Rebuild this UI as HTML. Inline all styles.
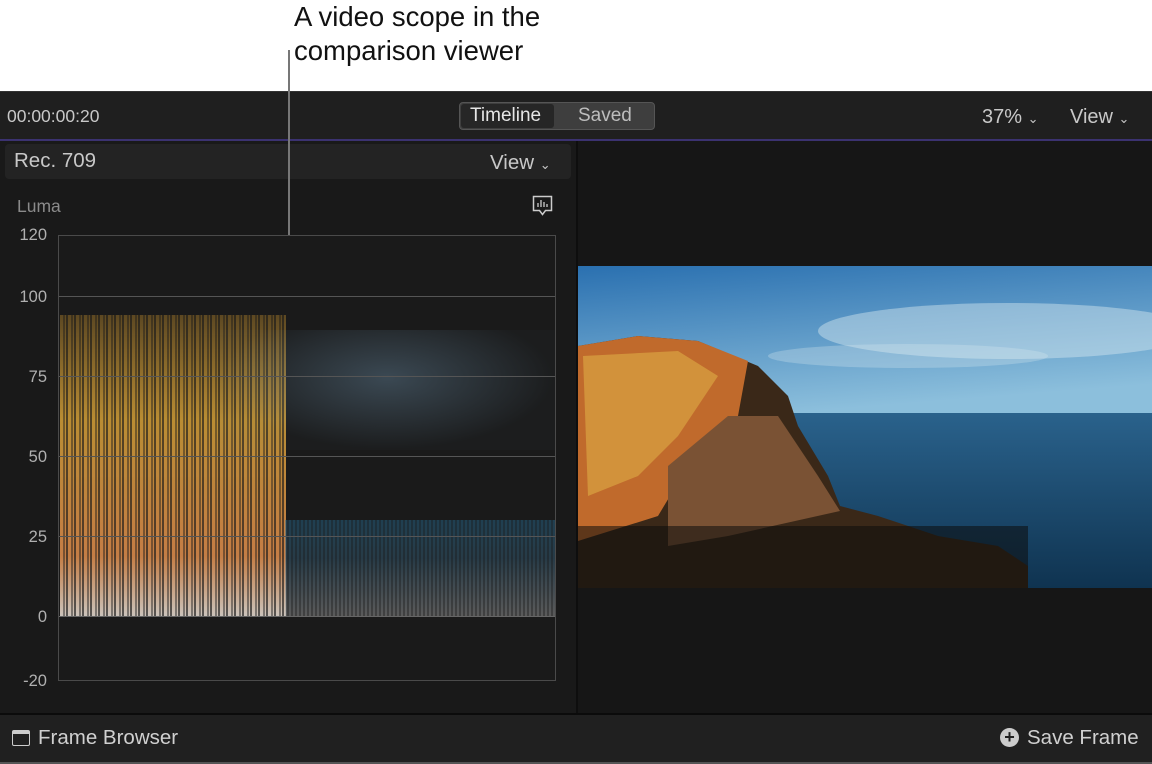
<!DOCTYPE html>
<html><head><meta charset="utf-8"><style>
*{margin:0;padding:0;box-sizing:border-box}
body{width:1152px;height:764px;background:#fff;position:relative;overflow:hidden;font-family:"Liberation Sans",sans-serif}
.a{position:absolute}
.t{color:#c8c8c8}
</style></head><body>
<div class="a" style="left:294px;top:0;font-size:27.5px;line-height:34px;color:#111">A video scope in the<br>comparison viewer</div>
<div class="a" style="left:288px;top:50px;width:2px;height:185px;background:#777;z-index:5"></div>
<div class="a" style="left:0;top:91px;width:1152px;height:673px;background:#161616"></div>
<div class="a" style="left:0;top:91px;width:1152px;height:48px;background:#1f1f1f;border-top:1px solid #333"></div>
<div class="a" style="left:0;top:139px;width:1152px;height:2px;background:#3b3270"></div>
<div class="a t" style="left:7px;top:106px;font-size:17.5px">00:00:00:20</div>
<div class="a" style="left:459px;top:102px;width:196px;height:28px;border-radius:4px;background:#3e3e3e;border:1px solid #555"></div>
<div class="a" style="left:461px;top:104px;width:93px;height:24px;border-radius:3px;background:#262626"></div>
<div class="a" style="left:470px;top:105px;font-size:19px;color:#e6e6e6">Timeline</div>
<div class="a" style="left:578px;top:105px;font-size:19px;color:#bdbdbd">Saved</div>
<div class="a t" style="left:982px;top:106px;font-size:20px">37% <span style="font-size:13px">⌄</span></div>
<div class="a t" style="left:1070px;top:106px;font-size:20px">View <span style="font-size:13px">⌄</span></div>
<div class="a" style="left:0;top:141px;width:576px;height:573px;background:#191919"></div>
<div class="a" style="left:576px;top:141px;width:2px;height:573px;background:#0e0e0e"></div>
<div class="a" style="left:5px;top:144px;width:566px;height:35px;background:#232323;border-radius:4px"></div>
<div class="a t" style="left:14px;top:149px;font-size:20.5px">Rec. 709</div>
<div class="a t" style="left:490px;top:151px;font-size:20.5px">View <span style="font-size:13px">⌄</span></div>
<div class="a" style="left:17px;top:196px;font-size:17.5px;color:#8a8a8a">Luma</div>
<svg class="a" style="left:532px;top:195px" width="22" height="22" viewBox="0 0 22 22"><path d="M1.5 1.5h18v14h-6l-3 4-3-4h-6z" fill="none" stroke="#ccc" stroke-width="1.5"/><path d="M6 12V8M9 12V5M12 12V7M15 12V9" stroke="#ccc" stroke-width="1.3"/></svg>
<div class="a" style="left:58px;top:235px;width:498px;height:446px;border:1px solid #4a4a4a;background:#1a1a1a"></div>
<div class="a" style="left:60px;top:315px;width:226px;height:301px;background:linear-gradient(180deg,rgba(220,160,50,.35),rgba(240,180,60,.75) 35%,rgba(240,150,80,.8) 80%,rgba(235,225,215,.85));-webkit-mask:repeating-linear-gradient(90deg,#000 0 3px,rgba(0,0,0,.55) 3px 5px,#000 5px 6px,rgba(0,0,0,.35) 6px 8px)"></div>
<div class="a" style="left:220px;top:330px;width:335px;height:120px;background:radial-gradient(ellipse at 50% 40%,rgba(120,160,190,.35),rgba(80,120,150,.03) 70%)"></div>
<div class="a" style="left:285px;top:520px;width:270px;height:96px;background:linear-gradient(180deg,rgba(40,110,150,.45),rgba(60,110,140,.4) 40%,rgba(170,170,170,.45));-webkit-mask:repeating-linear-gradient(90deg,#000 0 2px,rgba(0,0,0,.6) 2px 4px)"></div>
<div class="a" style="left:59px;top:296px;width:496px;height:1px;background:#555"></div>
<div class="a" style="left:59px;top:376px;width:496px;height:1px;background:#555"></div>
<div class="a" style="left:59px;top:456px;width:496px;height:1px;background:#555"></div>
<div class="a" style="left:59px;top:536px;width:496px;height:1px;background:#555"></div>
<div class="a" style="left:59px;top:616px;width:496px;height:1px;background:#666"></div>
<div class="a" style="left:0;top:225px;width:47px;text-align:right;font-size:16.5px;color:#b0b0b0;line-height:20px">
<div style="position:absolute;right:0;top:0">120</div><div style="position:absolute;right:0;top:62px">100</div><div style="position:absolute;right:0;top:142px">75</div><div style="position:absolute;right:0;top:222px">50</div><div style="position:absolute;right:0;top:302px">25</div><div style="position:absolute;right:0;top:382px">0</div><div style="position:absolute;right:0;top:446px">-20</div></div>
<svg class="a" style="left:578px;top:266px" width="574" height="322" viewBox="0 0 574 322">
<defs><linearGradient id="s" x1="0" y1="0" x2="0.3" y2="1"><stop offset="0" stop-color="#2a70b0"/><stop offset="1" stop-color="#8cbfdc"/></linearGradient>
<linearGradient id="w" x1="0" y1="0" x2="0" y2="1"><stop offset="0" stop-color="#2a628c"/><stop offset="1" stop-color="#0f3350"/></linearGradient></defs>
<rect width="574" height="150" fill="url(#s)"/>
<ellipse cx="430" cy="65" rx="190" ry="28" fill="#d8e8f0" opacity=".45"/>
<ellipse cx="330" cy="90" rx="140" ry="12" fill="#d8e8f0" opacity=".3"/>
<rect y="147" width="574" height="175" fill="url(#w)"/>
<path d="M0 80 L60 70 L120 75 L180 100 L210 130 L220 160 L250 210 L262 240 L300 250 L360 270 L420 280 L450 300 L450 322 L0 322Z" fill="#3a2818"/>
<path d="M0 80 L60 70 L120 75 L170 95 L160 150 L110 200 L80 250 L0 275Z" fill="#c06a2c"/>
<path d="M5 90 L100 85 L140 110 L100 170 L60 210 L10 230Z" fill="#d8a040" opacity=".75"/>
<path d="M90 200 L150 150 L200 150 L240 210 L262 245 L150 270 L90 280Z" fill="#7a5234"/>
<rect y="260" width="450" height="62" fill="#0c0c0c" opacity=".55"/>
</svg>
<div class="a" style="left:0;top:713px;width:1152px;height:2px;background:#0b0b0b"></div>
<div class="a" style="left:0;top:715px;width:1152px;height:47px;background:#202020"></div>
<div class="a" style="left:0;top:762px;width:1152px;height:2px;background:#555"></div>
<div class="a" style="left:12px;top:730px;width:18px;height:16px;border:1.5px solid #ccc;border-top-width:4px;border-radius:2px"></div>
<div class="a t" style="left:38px;top:726px;font-size:20.5px;color:#d0d0d0">Frame Browser</div>
<div class="a" style="left:1000px;top:728px;width:19px;height:19px;border-radius:50%;background:#ccc;color:#202020;font-size:18px;font-weight:bold;line-height:19px;text-align:center">+</div>
<div class="a t" style="left:1027px;top:726px;font-size:20.5px;color:#d0d0d0">Save Frame</div>
</body></html>
